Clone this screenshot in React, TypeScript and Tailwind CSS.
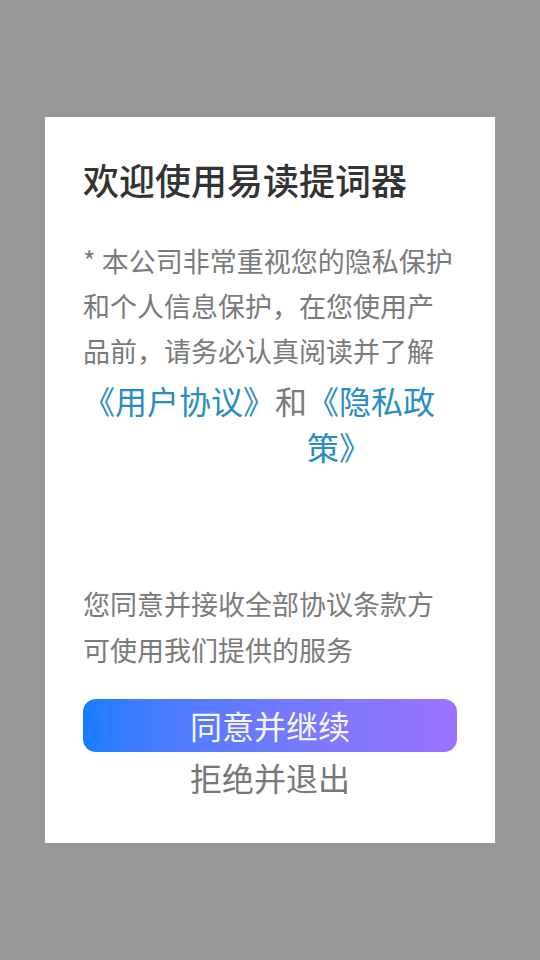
import React from "react";

const cjk = { fontFamily: '"Noto Sans CJK SC", "Noto Sans", sans-serif' };

export default function App() {
  return (
    <div
      className="flex min-h-screen w-full items-center justify-center bg-[#979797]"
      style={cjk}
    >
      <div className="flex h-[726px] w-[450px] flex-col bg-white px-[38px] pt-[38px]">
        <h1 className="text-[36px] leading-[48px] font-medium text-[#333333]">
          欢迎使用易读提词器
        </h1>

        <p className="mt-[35px] text-[27px] leading-[45px] text-[#7a7a7a]">
          * 本公司非常重视您的隐私保护和个人信息保护，在您使用产品前，请务必认真阅读并了解
        </p>

        {/* agreement links, the last one wraps inside its own box */}
        <div className="mt-[4px] flex items-start text-[32px] leading-[46px]">
          <a className="shrink-0 text-[#2a8dc2]">《用户协议》</a>
          <span className="shrink-0 text-[#7a7a7a]">和</span>
          <a className="min-w-0 flex-1 text-[#2a8dc2]">《隐私政策》</a>
        </div>

        <div className="flex-1" />

        <p className="text-[27px] leading-[46px] text-[#7a7a7a]">
          您同意并接收全部协议条款方可使用我们提供的服务
        </p>

        <button
          type="button"
          className="mt-[26px] h-[53px] w-full rounded-[13px] bg-gradient-to-r from-[#147dff] to-[#9c72ff] text-[32px] leading-[53px] text-[#f6f6ff]"
        >
          同意并继续
        </button>
        <button
          type="button"
          className="mt-[2px] mb-[43px] w-full text-[32px] leading-[46px] text-[#777777]"
        >
          拒绝并退出
        </button>
      </div>
    </div>
  );
}
